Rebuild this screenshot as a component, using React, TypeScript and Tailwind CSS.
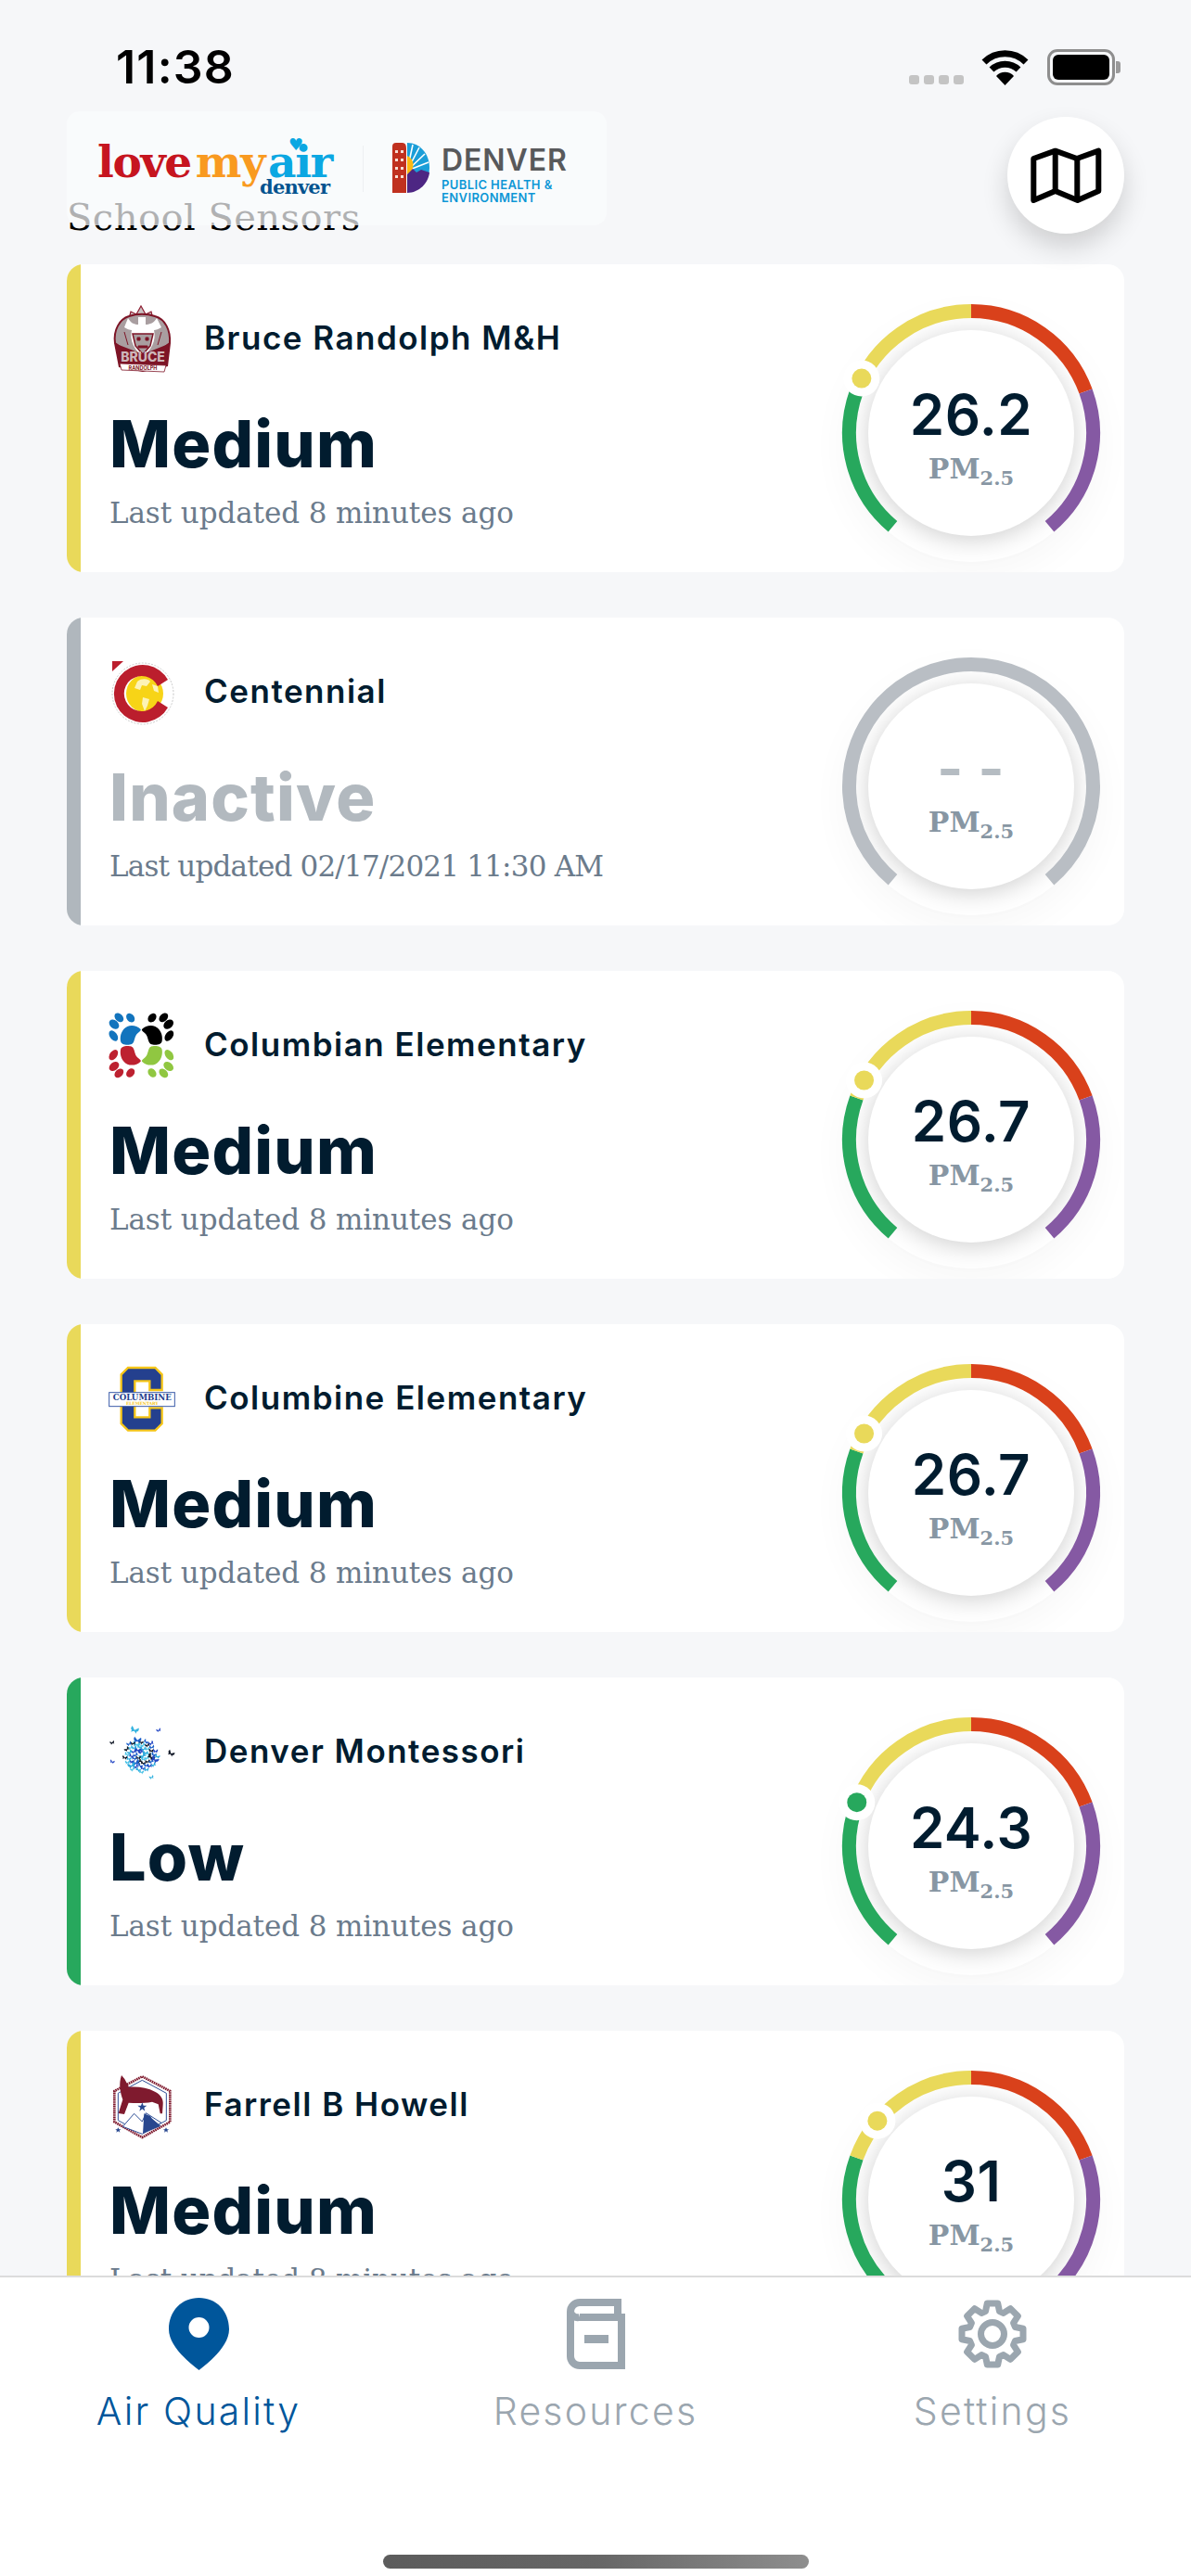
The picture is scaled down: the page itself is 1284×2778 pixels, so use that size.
const sans = "font-['Inter',sans-serif]";
const slab = "font-['DejaVu_Serif',serif]";

type Sensor = {
  name: string;
  level: string;
  updated: string;
  value: string;
  angle?: number;
  stripe: string;
  dot?: string;
  logo: React.ReactNode;
};

const YELLOW = "#e9d95a";
const GREEN = "#27a85d";

function polar(r: number, deg: number) {
  const a = ((deg - 90) * Math.PI) / 180;
  return [139 + r * Math.cos(a), 139 + r * Math.sin(a)];
}

function arc(from: number, to: number) {
  const [x1, y1] = polar(131.5, from);
  const [x2, y2] = polar(131.5, to);
  const large = to - from > 180 ? 1 : 0;
  return `M${x1} ${y1}A131.5 131.5 0 ${large} 1 ${x2} ${y2}`;
}

function Gauge({ s }: { s: Sensor }) {
  const inactive = s.angle === undefined;
  const dot = inactive ? null : polar(132, s.angle as number);
  return (
    <div className="relative w-[278px] h-[278px] rounded-full shadow-[0_14px_40px_rgba(0,0,0,0.035)]">
      <svg width="278" height="278" viewBox="0 0 278 278" className="overflow-visible">
        <circle cx="139" cy="139" r="111" fill="#ffffff" className="drop-shadow-[0_4px_13px_rgba(0,0,0,0.19)]" />
        {inactive ? (
          <path d={arc(-140, 140)} fill="none" stroke="#b9bec4" strokeWidth="15" />
        ) : (
          <>
            <path d={arc(-140, -70)} fill="none" stroke={GREEN} strokeWidth="15" />
            <path d={arc(-70, 0)} fill="none" stroke={YELLOW} strokeWidth="15" />
            <path d={arc(0, 70)} fill="none" stroke="#d9411b" strokeWidth="15" />
            <path d={arc(70, 140)} fill="none" stroke="#8559a3" strokeWidth="15" />
          </>
        )}
        {dot && (
          <>
            <circle cx={dot[0]} cy={dot[1]} r="19.5" fill="#ffffff" />
            <circle cx={dot[0]} cy={dot[1]} r="10.5" fill={s.dot} />
          </>
        )}
      </svg>
      <div className="absolute inset-0 flex flex-col items-center pt-[89px]">
        <div
          className={`${sans} text-[60px] leading-[60px] ${
            inactive ? "font-bold text-[#b5bcc2] tracking-[1px]" : "font-semibold text-[#011c2f] tracking-[0.5px]"
          }`}
        >
          {s.value}
        </div>
        <div className={`${slab} mt-[10px] text-[30px] leading-[38px] font-bold text-[#8796a3] whitespace-nowrap`}>
          PM<span className="text-[21px] align-[-7px]">2.5</span>
        </div>
      </div>
    </div>
  );
}

function BruceLogo() {
  return (
    <svg width="72" height="72" viewBox="0 0 72 72" className="overflow-visible">
      <path d="M34 0l5 9 6-3 2 8H21l2-8 6 3z" fill="#c9c2c2" stroke="#8e1c30" strokeWidth="1.2" />
      <path d="M6 40C4 26 11 14 21 11c9-3 19-3 28 0 11 3 17 15 16 29L36 62z" fill="#a99ea0" stroke="#7d1426" strokeWidth="2" />
      <path d="M20 13c3 5 6 7 11 7V12h8v8c5 0 9-2 12-7l5 10c-3 2-6 3-8 3 3 12-4 22-12 29-8-7-15-17-12-29-2 0-5-1-8-3z" fill="#ffffff" />
      <path d="M25 30h22l-3 13-8 9-8-9z" fill="#a99ea0" stroke="#7d1426" strokeWidth="1.5" />
      <path d="M30 34h3v3h-3zM39 34h3v3h-3zM31 43h10v2H31zM16 28l4 14M56 28l-4 14" fill="#7d1426" stroke="#7d1426" strokeWidth="1" />
      <path d="M5 40l31 12 30-12-3 25-27 6-26-5z" fill="#7d1426" />
      <text x="36" y="60" textAnchor="middle" fontSize="14" fontWeight="800" fill="#cdb6ba" fontFamily="Inter, sans-serif">
        BRUCE
      </text>
      <path d="M11 62l50 2-2 7-46-2z" fill="#fff" stroke="#7d1426" strokeWidth="0.8" />
      <text x="36" y="69" textAnchor="middle" fontSize="5.5" fontWeight="700" fill="#7d1426" fontFamily="Inter, sans-serif">
        RANDOLPH
      </text>
    </svg>
  );
}

function CentennialLogo() {
  return (
    <svg width="72" height="72" viewBox="0 0 72 72" className="overflow-visible">
      <circle cx="36" cy="37" r="33" fill="none" stroke="#c9c9c9" strokeWidth="1" strokeDasharray="2 1.5" />
      <path d="M3 2h12L3 13z" fill="#bb1e2d" />
      <circle cx="38" cy="37" r="20" fill="#f7d417" />
      <path d="M30 24c5-4 12-3 14 0l-4 5-5-1-2 5-6-2zM36 41l7 2-2 7-3 6-3-8zM46 27l6 2 1 7-5-2z" fill="#fdf3b5" />
      <path d="M63 22A31 31 0 1 0 63 52L52 45A19 19 0 1 1 52 29z" fill="#bb1e2d" />
    </svg>
  );
}

function Paw({ fill, transform }: { fill: string; transform?: string }) {
  return (
    <g fill={fill} transform={transform}>
      <path d="M90 158c-3-18 4-38 22-47 14-6 32-2 43 9 2 3-3 7-8 11-10 8-10 17-14 28-3 9-9 11-21 11-11 0-20-3-22-12z" />
      <ellipse cx="69" cy="104" rx="18" ry="13" transform="rotate(40 69 104)" />
      <ellipse cx="85" cy="82" rx="17" ry="12" transform="rotate(45 85 82)" />
      <ellipse cx="122" cy="83" rx="16" ry="12" transform="rotate(50 122 83)" />
      <ellipse cx="67" cy="141" rx="19" ry="12" transform="rotate(55 67 141)" />
    </g>
  );
}

function ColumbianLogo() {
  return (
    <svg width="72" height="72" viewBox="54 66 216 216" className="overflow-visible">
      <Paw fill="#1274bd" />
      <Paw fill="#000000" transform="translate(314 0) scale(-1 1)" />
      <Paw fill="#bd2130" transform="translate(0 344) scale(1 -1)" />
      <Paw fill="#90c741" transform="translate(314 344) scale(-1 -1)" />
    </svg>
  );
}

function ColumbineLogo() {
  return (
    <svg width="72" height="72" viewBox="54 69 216 216" className="overflow-visible">
      <path
        d="M114 75h88l22 22v50h-40v-29h-48v117h48v-30h40v51l-22 22h-88l-22-22V97z"
        fill="#24408e"
        stroke="#f5c518"
        strokeWidth="7"
      />
      <rect x="53" y="155" width="212" height="45" fill="#ffffff" stroke="#3a5aa8" strokeWidth="3" />
      <text x="160" y="180" textAnchor="middle" fontSize="26" fontWeight="800" fill="#24408e" fontFamily="'DejaVu Serif', serif">
        COLUMBINE
      </text>
      <text x="160" y="196" textAnchor="middle" fontSize="13" fontWeight="800" fill="#f5c518" fontFamily="'DejaVu Serif', serif">
        ELEMENTARY
      </text>
    </svg>
  );
}

function Butterfly({ x, y, size, fill, rot }: { x: number; y: number; size: number; fill: string; rot: number }) {
  return (
    <path
      transform={`translate(${x} ${y}) rotate(${rot}) scale(${size})`}
      d="M0 0L-7-7Q-10 0-5 2L-6 6 0 2 6 6 5 2Q10 0 7-7z"
      fill={fill}
    />
  );
}

function MontessoriLogo() {
  const colors = ["#2aa9dc", "#111827", "#2447c4", "#4cc3e6", "#1b5fc9"];
  const flock = Array.from({ length: 56 }, (_, i) => {
    const r = 7.2 * Math.sqrt(i + 1);
    const a = i * 2.4;
    return {
      x: 155 + r * Math.cos(a),
      y: 190 + r * Math.sin(a),
      fill: colors[i % colors.length],
      rot: (i * 47) % 90 - 45,
      size: i % 7 === 0 ? 1.5 : 1,
    };
  });
  return (
    <svg width="72" height="72" viewBox="54 72 216 216" className="overflow-visible">
      {flock.map((b, i) => (
        <Butterfly key={i} {...b} />
      ))}
      <Butterfly x={135} y={107} size={1.6} fill="#36b4e0" rot={20} />
      <Butterfly x={213} y={108} size={0.9} fill="#2447c4" rot={-20} />
      <Butterfly x={63} y={148} size={0.9} fill="#111827" rot={-20} />
      <Butterfly x={253} y={183} size={1.3} fill="#111827" rot={30} />
      <Butterfly x={63} y={210} size={0.9} fill="#2447c4" rot={20} />
      <Butterfly x={190} y={260} size={0.9} fill="#36b4e0" rot={-20} />
    </svg>
  );
}

function FarrellLogo() {
  return (
    <svg width="72" height="72" viewBox="54 75 216 216" className="overflow-visible">
      <path d="M160 88l90 47v100l-90 50-90-50V135z" fill="#ffffff" stroke="#7f1a2e" strokeWidth="8" strokeDasharray="5 2" />
      <path d="M160 100l78 42v88l-78 42-78-42v-88z" fill="none" stroke="#2f4f96" strokeWidth="3" />
      <path d="M97 250l37-42 26 26 12-28 50 32-62 36z" fill="#ffffff" stroke="#2f4f96" strokeWidth="3" />
      <path d="M166 208l20 8 6 8 28 24-58 25z" fill="#28478f" />
      <path d="M93 84l10 12 14 26c30-2 60 2 84 15 20 10 28 26 26 42l-2 29h-7l-6-30-20-8c-26 5-50 5-76 3l-14 37-19-3 14-44c-8-24-14-50-4-79z" fill="#7f1a2e" />
      <path d="M160 172l4 10h11l-9 7 3 11-9-7-9 7 3-11-9-7h11z" fill="#28478f" />
      <path d="M82 253l3 6h6l-5 4 2 6-6-4-6 4 2-6-5-4h6zM237 253l3 6h6l-5 4 2 6-6-4-6 4 2-6-5-4h6z" fill="#28478f" />
    </svg>
  );
}

const sensors: Sensor[] = [
  { name: "Bruce Randolph M&H", level: "Medium", updated: "Last updated 8 minutes ago", value: "26.2", angle: -63.5, stripe: "bg-[#e9d95a]", dot: YELLOW, logo: <BruceLogo /> },
  { name: "Centennial", level: "Inactive", updated: "Last updated 02/17/2021 11:30 AM", value: "- -", stripe: "bg-[#b0b7bd]", logo: <CentennialLogo /> },
  { name: "Columbian Elementary", level: "Medium", updated: "Last updated 8 minutes ago", value: "26.7", angle: -61, stripe: "bg-[#e9d95a]", dot: YELLOW, logo: <ColumbianLogo /> },
  { name: "Columbine Elementary", level: "Medium", updated: "Last updated 8 minutes ago", value: "26.7", angle: -61, stripe: "bg-[#e9d95a]", dot: YELLOW, logo: <ColumbineLogo /> },
  { name: "Denver Montessori", level: "Low", updated: "Last updated 8 minutes ago", value: "24.3", angle: -69, stripe: "bg-[#27a85d]", dot: GREEN, logo: <MontessoriLogo /> },
  { name: "Farrell B Howell", level: "Medium", updated: "Last updated 8 minutes ago", value: "31", angle: -50, stripe: "bg-[#e9d95a]", dot: YELLOW, logo: <FarrellLogo /> },
];

function SensorCard({ s }: { s: Sensor }) {
  const inactive = s.level === "Inactive";
  return (
    <div className="shrink-0 h-[332px] rounded-[18px] bg-white overflow-hidden flex">
      <div className={`w-[15px] shrink-0 ${s.stripe}`} />
      <div className="flex-1 pl-[31px] pt-[45px]">
        <div className="flex items-center gap-[30px] h-[72px]">
          <div className="w-[72px] h-[72px] shrink-0">{s.logo}</div>
          <div className={`${sans} text-[35px] leading-[40px] font-semibold text-[#011c2f] tracking-[1.5px] mt-[-4px]`}>{s.name}</div>
        </div>
        <div className={`${sans} mt-[37px] text-[70px] leading-[80px] font-extrabold tracking-[1.2px] ${inactive ? "text-[#b2b9bf]" : "text-[#011c2f]"}`}>
          {s.level}
        </div>
        <div className={`${slab} mt-[14px] text-[31px] leading-[40px] text-[#6b7b8c] whitespace-nowrap ${inactive ? "tracking-[-0.8px]" : "tracking-[-0.1px]"}`}>
          {s.updated}
        </div>
      </div>
      <div className="shrink-0 pr-[26px] pt-[43px]">
        <Gauge s={s} />
      </div>
    </div>
  );
}

function StatusBar() {
  return (
    <div className="h-[110px] shrink-0 flex items-start justify-between pl-[125px] pr-[76px] pt-[46px]">
      <div className={`${sans} text-[50px] leading-[52px] font-semibold tracking-[1.2px] text-black`}>11:38</div>
      <div className="flex items-end gap-[19px] pt-[7px]">
        <div className="flex gap-[5px] pb-[1px]">
          <span className="w-[11px] h-[10px] rounded-[3px] bg-[#c4c4c4]" />
          <span className="w-[11px] h-[10px] rounded-[3px] bg-[#c4c4c4]" />
          <span className="w-[11px] h-[10px] rounded-[3px] bg-[#c4c4c4]" />
          <span className="w-[11px] h-[10px] rounded-[3px] bg-[#c4c4c4]" />
        </div>
        <svg width="51" height="38" viewBox="0 0 51 38" fill="none" stroke="#000" strokeWidth="7">
          <path d="M3 13a32 32 0 0 1 45 0" />
          <path d="M11 21a21 21 0 0 1 29 0" />
          <path d="M25.5 38L16 28a13 13 0 0 1 19 0z" fill="#000" stroke="none" />
        </svg>
        <div className="flex items-center gap-[1px] ml-[1px]">
          <div className="w-[73px] h-[39px] rounded-[11px] border-[3px] border-[#8e8e8e] p-[3px]">
            <div className="w-full h-full rounded-[6px] bg-black" />
          </div>
          <div className="w-[5px] h-[13px] rounded-r-[3px] bg-[#9a9a9a]" />
        </div>
      </div>
    </div>
  );
}

function DenverMark() {
  return (
    <svg width="40" height="54" viewBox="0 0 40 54">
      <path d="M0 4Q0 0 4 0h7q4 0 4 6v48H0z" fill="#c0311f" />
      {[8, 17, 26, 35].map((y) => (
        <g key={y} fill="#f6dfd5">
          <rect x="3" y={y} width="3" height="3" />
          <rect x="9" y={y} width="3" height="3" />
        </g>
      ))}
      <path d="M16 0C30 0 40 12 40 27c0 6-2 11-4 14L16 30z" fill="#1b9ed8" />
      <path d="M16 30L22 2M16 30L29 5M16 30L35 12M16 30L39 21" stroke="#fff" strokeWidth="1.6" />
      <path d="M16 14a11 11 0 0 1 0 20z" fill="#fdb913" />
      <path d="M16 34l6-6 4 4 5-3 9 3c-1 11-11 22-24 22z" fill="#4d2683" />
    </svg>
  );
}

function LogoBar() {
  return (
    <div className="absolute left-[72px] top-[120px] w-[582px] h-[123px] rounded-[14px] bg-[#fbfcfd]/70 flex items-start">
      <div className="w-[319px] shrink-0 pl-[33px] pt-[31px]">
        <div className={`${slab} flex text-[47px] leading-[48px] font-bold tracking-[-1.4px] whitespace-nowrap`}>
          <span className="text-[#c6151f]">love</span>
          <span className="text-[#f99a20] ml-[5px]">my</span>
          <span className="relative text-[#0ba7e2] ml-[4px]">
            air
            <span className="absolute left-[22px] top-[-4px] text-[18px] leading-[18px] tracking-normal text-[#0ba7e2]">♥</span>
          </span>
        </div>
        <div className={`${slab} ml-[175px] mt-[-9px] text-[21px] leading-[24px] font-bold tracking-[-0.8px] text-[#04538f]`}>denver</div>
      </div>
      <div className="w-px h-[50px] mt-[37px] bg-[#eef0f2] shrink-0" />
      <div className="ml-[31px] mt-[34px] shrink-0">
        <DenverMark />
      </div>
      <div className={`${sans} ml-[13px] mt-[36px] whitespace-nowrap`}>
        <div className="text-[32px] leading-[34px] font-semibold tracking-[0.9px] text-[#58595b]">DENVER</div>
        <div className="mt-[2px] text-[13px] leading-[14px] font-semibold tracking-[0.4px] text-[#0d97d6]">PUBLIC HEALTH &amp;</div>
        <div className="text-[13px] leading-[14px] font-semibold tracking-[0.4px] text-[#0d97d6]">ENVIRONMENT</div>
      </div>
    </div>
  );
}

function MapButton() {
  return (
    <button className="absolute right-[72px] top-[126px] w-[126px] h-[126px] rounded-full bg-white flex items-center justify-center shadow-[0_14px_28px_rgba(0,0,0,0.16)]">
      <svg width="77" height="61" viewBox="20 18 77 61" fill="none" stroke="#000" strokeWidth="6" strokeLinejoin="round">
        <path d="M23.3 30L46.7 21.7 70 30 93.3 21.7V65L70.7 75 46.7 65 23.3 75z" />
        <path d="M46.7 21.7V65M70.3 30V75" />
      </svg>
    </button>
  );
}

function PinIcon() {
  return (
    <svg width="65" height="78" viewBox="0 0 65 78">
      <path
        fillRule="evenodd"
        d="M32.5 0C51 0 65 14 65 34 65 52 44 69 32.5 78 21 69 0 52 0 34 0 14 14 0 32.5 0zM32.5 21a11 11 0 1 0 0 22 11 11 0 0 0 0-22z"
        fill="#00569b"
      />
    </svg>
  );
}

function BookIcon() {
  return (
    <svg width="63" height="76" viewBox="0 0 63 76" fill="none" stroke="#9ba6af" strokeWidth="8">
      <path d="M55 22V4H14A10 10 0 0 0 4 14V62A10 10 0 0 0 14 72H59V20H14" />
      <path d="M4 14A8 8 0 0 0 14 20" />
      <rect x="19" y="39" width="26" height="9" fill="#9ba6af" stroke="none" />
    </svg>
  );
}

function gearPath() {
  // eight teeth, walked round the wheel
  const pts: string[] = [];
  for (let i = 0; i < 8; i++) {
    const a = (i * Math.PI) / 4 - Math.PI / 2;
    [
      [-0.3, 25.5],
      [-0.17, 33.5],
      [0.17, 33.5],
      [0.3, 25.5],
    ].forEach(([da, r]) => {
      pts.push(`${(38 + r * Math.cos(a + da)).toFixed(1)} ${(38 + r * Math.sin(a + da)).toFixed(1)}`);
    });
  }
  return `M${pts.join("L")}Z`;
}

function GearIcon() {
  return (
    <svg width="76" height="76" viewBox="0 0 76 76" fill="none" stroke="#9ba6af" strokeWidth="7" strokeLinejoin="round">
      <path d={gearPath()} />
      <circle cx="38" cy="38" r="12.5" />
    </svg>
  );
}

function BottomNav() {
  const tabs = [
    { label: "Air Quality", color: "text-[#00569b]", icon: <PinIcon /> },
    { label: "Resources", color: "text-[#9ba6af]", icon: <BookIcon /> },
    { label: "Settings", color: "text-[#9ba6af]", icon: <GearIcon /> },
  ];
  return (
    <div className="h-[324px] shrink-0 bg-white border-t-2 border-[#dcdcdc] flex flex-col">
      <div className="grid grid-cols-3 pt-[21px]">
        {tabs.map((t) => (
          <div key={t.label} className="flex flex-col items-center">
            <div className="h-[80px] flex items-center justify-center">{t.icon}</div>
            <div className={`${sans} mt-[19px] text-[41px] leading-[48px] font-light tracking-[2.2px] ${t.color}`}>{t.label}</div>
          </div>
        ))}
      </div>
      <div className="mt-[131px] mx-auto w-[459px] h-[15px] rounded-full bg-gradient-to-r from-[#5c5c5c] via-[#666666] to-[#8e8e8e]" />
    </div>
  );
}

export default function App() {
  return (
    <div className="relative h-[2778px] w-[1284px] overflow-hidden bg-[#f6f7f9] flex flex-col">
      <StatusBar />
      <div className="h-[175px] shrink-0 pl-[72px] pt-[102px]">
        <div className={`${slab} text-[40px] leading-[44px] text-black tracking-[0.45px] whitespace-nowrap`}>School Sensors</div>
      </div>
      <div className="flex-1 min-h-0 overflow-hidden px-[72px] flex flex-col gap-[49px]">
        {sensors.map((s) => (
          <SensorCard key={s.name} s={s} />
        ))}
      </div>
      <BottomNav />
      <LogoBar />
      <MapButton />
    </div>
  );
}
